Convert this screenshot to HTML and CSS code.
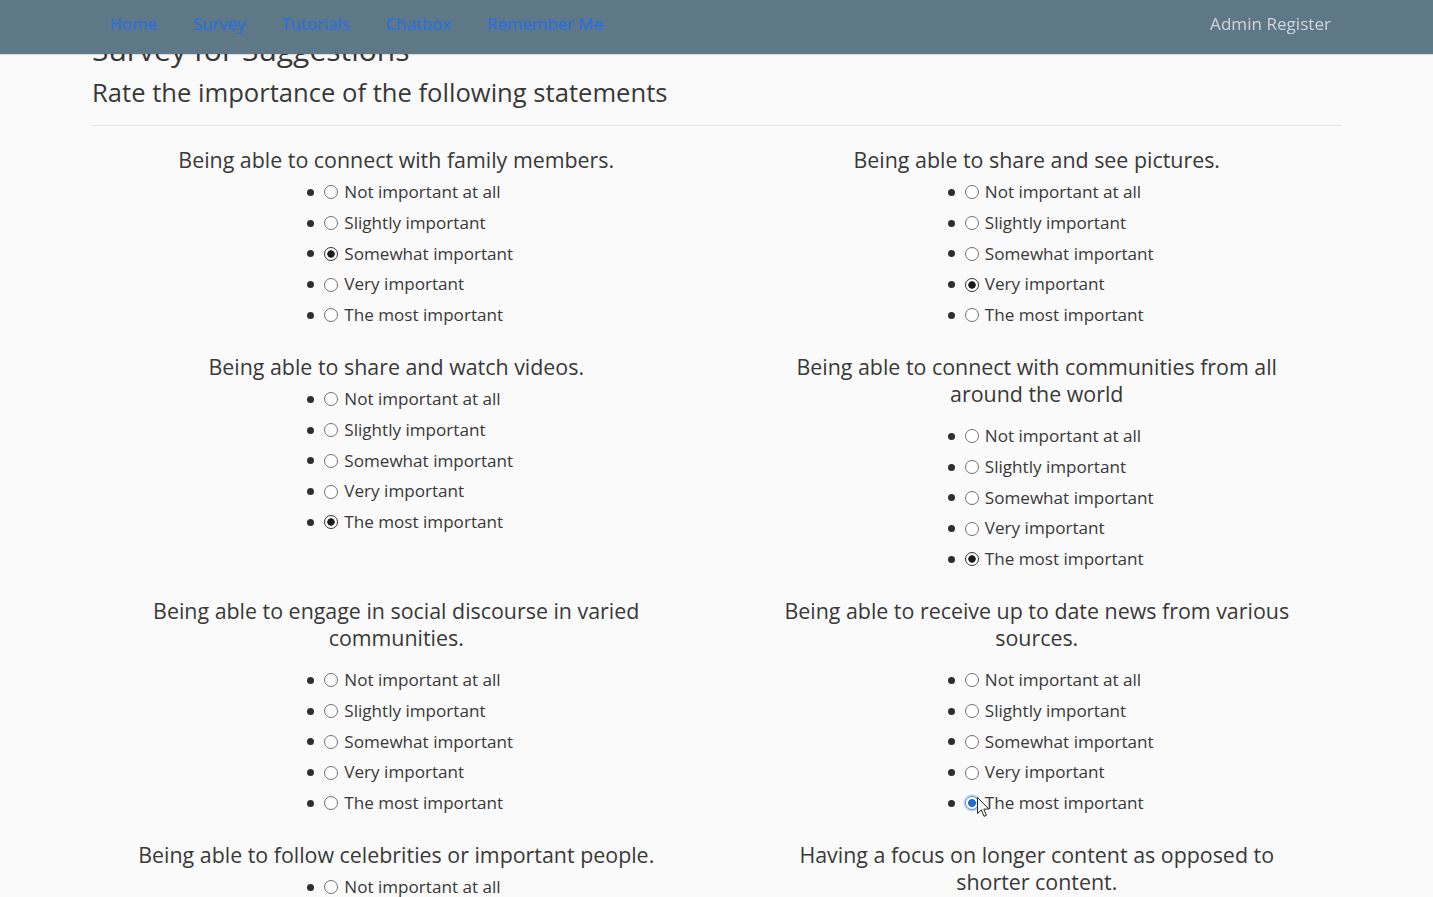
FILE: index.html
```html
<!DOCTYPE html>
<html lang="en">
<head>
<meta charset="utf-8">
<title>Survey for Suggestions</title>
<link rel="stylesheet" href="styles.css">
</head>
<body>
<nav class="navbar">
  <ul class="nav-links">
    <li><a class="nav-link" href="#">Home</a></li>
    <li><a class="nav-link" href="#">Survey</a></li>
    <li><a class="nav-link" href="#">Tutorials</a></li>
    <li><a class="nav-link" href="#">Chatbox</a></li>
    <li><a class="nav-link" href="#">Remember Me</a></li>
  </ul>
  <a class="nav-admin" href="#">Admin Register</a>
</nav>

<main class="page">
  <h1 class="page-title">Survey for Suggestions</h1>
  <h3 class="page-subtitle">Rate the importance of the following statements</h3>
  <hr class="divider">

  <form class="questions">
    <section class="question">
      <h4 class="question-title">Being able to connect with family members.</h4>
      <ul class="options">
        <li class="option"><input class="radio" type="radio" name="q1"><span>Not important at all</span></li>
        <li class="option"><input class="radio" type="radio" name="q1"><span>Slightly important</span></li>
        <li class="option"><input class="radio" type="radio" name="q1" checked><span>Somewhat important</span></li>
        <li class="option"><input class="radio" type="radio" name="q1"><span>Very important</span></li>
        <li class="option"><input class="radio" type="radio" name="q1"><span>The most important</span></li>
      </ul>
    </section>

    <section class="question">
      <h4 class="question-title">Being able to share and see pictures.</h4>
      <ul class="options">
        <li class="option"><input class="radio" type="radio" name="q2"><span>Not important at all</span></li>
        <li class="option"><input class="radio" type="radio" name="q2"><span>Slightly important</span></li>
        <li class="option"><input class="radio" type="radio" name="q2"><span>Somewhat important</span></li>
        <li class="option"><input class="radio" type="radio" name="q2" checked><span>Very important</span></li>
        <li class="option"><input class="radio" type="radio" name="q2"><span>The most important</span></li>
      </ul>
    </section>

    <section class="question">
      <h4 class="question-title">Being able to share and watch videos.</h4>
      <ul class="options">
        <li class="option"><input class="radio" type="radio" name="q3"><span>Not important at all</span></li>
        <li class="option"><input class="radio" type="radio" name="q3"><span>Slightly important</span></li>
        <li class="option"><input class="radio" type="radio" name="q3"><span>Somewhat important</span></li>
        <li class="option"><input class="radio" type="radio" name="q3"><span>Very important</span></li>
        <li class="option"><input class="radio" type="radio" name="q3" checked><span>The most important</span></li>
      </ul>
    </section>

    <section class="question">
      <h4 class="question-title question-title--wrap">Being able to connect with communities from all around the world</h4>
      <ul class="options">
        <li class="option"><input class="radio" type="radio" name="q4"><span>Not important at all</span></li>
        <li class="option"><input class="radio" type="radio" name="q4"><span>Slightly important</span></li>
        <li class="option"><input class="radio" type="radio" name="q4"><span>Somewhat important</span></li>
        <li class="option"><input class="radio" type="radio" name="q4"><span>Very important</span></li>
        <li class="option"><input class="radio" type="radio" name="q4" checked><span>The most important</span></li>
      </ul>
    </section>

    <section class="question">
      <h4 class="question-title question-title--wrap">Being able to engage in social discourse in varied communities.</h4>
      <ul class="options">
        <li class="option"><input class="radio" type="radio" name="q5"><span>Not important at all</span></li>
        <li class="option"><input class="radio" type="radio" name="q5"><span>Slightly important</span></li>
        <li class="option"><input class="radio" type="radio" name="q5"><span>Somewhat important</span></li>
        <li class="option"><input class="radio" type="radio" name="q5"><span>Very important</span></li>
        <li class="option"><input class="radio" type="radio" name="q5"><span>The most important</span></li>
      </ul>
    </section>

    <section class="question">
      <h4 class="question-title question-title--wrap">Being able to receive up to date news from various sources.</h4>
      <ul class="options">
        <li class="option"><input class="radio" type="radio" name="q6"><span>Not important at all</span></li>
        <li class="option"><input class="radio" type="radio" name="q6"><span>Slightly important</span></li>
        <li class="option"><input class="radio" type="radio" name="q6"><span>Somewhat important</span></li>
        <li class="option"><input class="radio" type="radio" name="q6"><span>Very important</span></li>
        <li class="option"><input class="radio radio--focus" type="radio" name="q6" checked><span>The most important</span>
          <svg class="cursor" width="13" height="21" viewBox="0 0 13 21" aria-hidden="true">
            <path d="M0.5 0.5 L0.5 16.5 L4.3 12.9 L7 19.3 L9.4 18.3 L6.8 12.1 L11.8 12.1 Z" fill="#fff" stroke="#222" stroke-width="1" stroke-linejoin="round"/>
          </svg>
        </li>
      </ul>
    </section>

    <section class="question">
      <h4 class="question-title">Being able to follow celebrities or important people.</h4>
      <ul class="options">
        <li class="option"><input class="radio" type="radio" name="q7"><span>Not important at all</span></li>
        <li class="option"><input class="radio" type="radio" name="q7"><span>Slightly important</span></li>
        <li class="option"><input class="radio" type="radio" name="q7"><span>Somewhat important</span></li>
        <li class="option"><input class="radio" type="radio" name="q7"><span>Very important</span></li>
        <li class="option"><input class="radio" type="radio" name="q7"><span>The most important</span></li>
      </ul>
    </section>

    <section class="question">
      <h4 class="question-title question-title--wrap">Having a focus on longer content as opposed to shorter content.</h4>
      <ul class="options">
        <li class="option"><input class="radio" type="radio" name="q8"><span>Not important at all</span></li>
        <li class="option"><input class="radio" type="radio" name="q8"><span>Slightly important</span></li>
        <li class="option"><input class="radio" type="radio" name="q8"><span>Somewhat important</span></li>
        <li class="option"><input class="radio" type="radio" name="q8"><span>Very important</span></li>
        <li class="option"><input class="radio" type="radio" name="q8"><span>The most important</span></li>
      </ul>
    </section>
  </form>
</main>
</body>
</html>
```

FILE: styles.css
```css
* {
  box-sizing: border-box;
}

html {
  scrollbar-width: none;
}

html::-webkit-scrollbar {
  display: none;
}

body {
  margin: 0;
  background: #fafafa;
  color: #383838;
  font-family: "Open Sans", "Noto Sans", sans-serif;
}

/* ---------- navbar ---------- */
.navbar {
  position: fixed;
  top: 0;
  left: 0;
  right: 0;
  z-index: 10;
  height: 54px;
  display: flex;
  justify-content: space-between;
  align-items: flex-start;
  padding: 12px 102px 0 110px;
  background: #5f7888;
  box-shadow: 0 1px 1px rgba(0, 0, 0, 0.12);
}

.nav-links {
  display: flex;
  gap: 36px;
  list-style: none;
  margin: 0;
  padding: 0;
}

.nav-link {
  color: #1f6ff0;
  text-decoration: none;
  font-size: 16.8px;
  line-height: 24px;
}

.nav-admin {
  color: #cdd6dc;
  text-decoration: none;
  font-size: 17.1px;
  line-height: 24px;
}

/* ---------- page ---------- */
.page {
  width: 1249px;
  margin: 0 auto;
  padding-top: 32px;
}

.page-title {
  margin: 0;
  font-size: 30px;
  font-weight: 400;
  line-height: 35px;
}

.page-subtitle {
  margin: 11px 0 0;
  font-size: 25.6px;
  font-weight: 400;
  line-height: 30px;
}

.divider {
  height: 0;
  margin: 17px 0 0;
  border: 0;
  border-top: 1px solid #e2e2e2;
}

/* ---------- questions ---------- */
.questions {
  display: grid;
  grid-template-columns: 1fr 1fr;
  column-gap: 32px;
  align-items: start;
  margin-top: 20px;
}

.question {
  text-align: center;
  padding-bottom: 22.25px;
}

.question-title {
  max-width: 525px;
  margin: 0 auto 4px;
  font-size: 21.4px;
  font-weight: 400;
  line-height: 27px;
}

.question-title--wrap {
  margin-bottom: 14px;
}

.options {
  display: inline-block;
  margin: 0;
  padding: 0 0 0 28px;
  list-style: none;
  text-align: left;
}

.option {
  position: relative;
  display: flex;
  align-items: center;
  height: 30.75px;
  font-size: 17.1px;
  line-height: 30.75px;
  white-space: nowrap;
}

.option::before {
  content: "";
  flex: none;
  width: 7px;
  height: 7px;
  margin-right: 10px;
  border-radius: 50%;
  background: #2e2e2e;
}

.radio {
  appearance: none;
  -webkit-appearance: none;
  flex: none;
  width: 14px;
  height: 14px;
  margin: 0 6px 0 0;
  border: 1px solid #707070;
  border-radius: 50%;
  background: #fff;
}

.radio:checked {
  border-color: #333;
  background: radial-gradient(circle, #1a1a1a 0 3.4px, #fff 4px);
}

.radio--focus:checked {
  border-color: #4b8ed6;
  background: radial-gradient(circle, #1f6fcc 0 3.6px, #fff 4.2px);
  box-shadow: 0 0 0 1.5px #b9d4f1;
}

.cursor {
  position: absolute;
  left: 29px;
  top: 9px;
}
```
